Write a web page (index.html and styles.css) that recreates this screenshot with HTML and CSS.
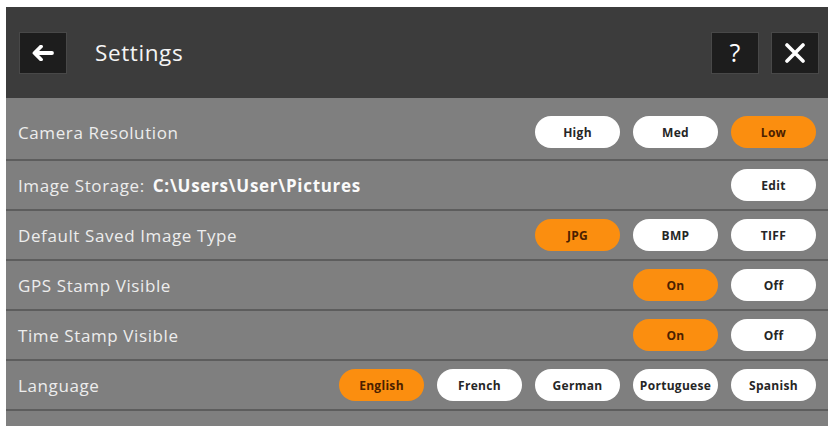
FILE: index.html
```html
<!DOCTYPE html>
<html>
<head>
<meta charset="utf-8">
<link rel="stylesheet" href="styles.css">
</head>
<body>
<div class="app">
  <div class="topbar">
    <button class="icon-btn" aria-label="Back">
      <svg width="22" height="16" viewBox="0 0 22 16"><path d="M9 1.5 L2.5 8 L9 14.5 M3 8 H20" fill="none" stroke="#fff" stroke-width="3.8" stroke-linecap="round" stroke-linejoin="round"/></svg>
    </button>
    <div class="title">Settings</div>
    <div class="top-actions">
      <button class="icon-btn glyph">?</button>
      <button class="icon-btn" aria-label="Close">
        <svg width="22" height="20" viewBox="0 0 22 20"><path d="M3 2 L19 18 M19 2 L3 18" fill="none" stroke="#fff" stroke-width="3.6" stroke-linecap="round"/></svg>
      </button>
    </div>
  </div>
  <div class="list">
    <div class="row first">
      <div class="label">Camera Resolution</div>
      <div class="options">
        <span class="pill">High</span><span class="pill">Med</span><span class="pill on">Low</span>
      </div>
    </div>
    <div class="row">
      <div class="label">Image Storage: <b class="path">C:\Users\User\Pictures</b></div>
      <div class="options">
        <span class="pill">Edit</span>
      </div>
    </div>
    <div class="row">
      <div class="label">Default Saved Image Type</div>
      <div class="options">
        <span class="pill on">JPG</span><span class="pill">BMP</span><span class="pill">TIFF</span>
      </div>
    </div>
    <div class="row">
      <div class="label">GPS Stamp Visible</div>
      <div class="options">
        <span class="pill on">On</span><span class="pill">Off</span>
      </div>
    </div>
    <div class="row">
      <div class="label">Time Stamp Visible</div>
      <div class="options">
        <span class="pill on">On</span><span class="pill">Off</span>
      </div>
    </div>
    <div class="row">
      <div class="label">Language</div>
      <div class="options">
        <span class="pill on">English</span><span class="pill">French</span><span class="pill">German</span><span class="pill">Portuguese</span><span class="pill">Spanish</span>
      </div>
    </div>
  </div>
</div>
</body>
</html>
```

FILE: styles.css
```css
html, body {
  margin: 0;
  padding: 0;
  background: #ffffff;
  height: 100%;
  overflow: hidden;
}
.app {
  margin: 7px 3px 0 6px;
  background: #7f7f7f;
  height: calc(100% - 7px);
  font-family: "Open Sans", "Noto Sans", sans-serif;
}
.topbar {
  height: 91px;
  box-sizing: border-box;
  background: #3c3c3c;
  display: flex;
  align-items: center;
  padding: 0 9px 0 13px;
}
.icon-btn {
  width: 48px;
  height: 42px;
  box-sizing: border-box;
  background: #1d1d1d;
  border: 1px solid #484848;
  display: flex;
  align-items: center;
  justify-content: center;
  padding: 0;
  margin: 0;
}
.glyph {
  color: #fff;
  font-family: "Open Sans", sans-serif;
  font-size: 25px;
  line-height: 1;
}
.title {
  margin-left: 28px;
  color: #f4f4f4;
  font-size: 22.5px;
  font-weight: 400;
  letter-spacing: 0.6px;
}
.top-actions {
  margin-left: auto;
  display: flex;
  gap: 12px;
}
.row {
  height: 50px;
  box-sizing: border-box;
  border-bottom: 2px solid #5d5d5d;
  display: flex;
  align-items: center;
  padding: 0 12px;
}
.row.first {
  height: 63px;
  padding-top: 7px;
}
.label {
  color: #ededed;
  font-size: 17px;
  letter-spacing: 0.6px;
  white-space: nowrap;
}
.path {
  font-weight: 700;
  color: #fafafa;
  margin-left: 3px;
  letter-spacing: 0.7px;
}
.options {
  margin-left: auto;
  display: flex;
  gap: 13px;
}
.pill {
  width: 85px;
  height: 32px;
  border-radius: 16px;
  background: #ffffff;
  color: #262626;
  font-size: 12px;
  letter-spacing: 0.3px;
  font-weight: 700;
  display: flex;
  align-items: center;
  justify-content: center;
}
.pill.on {
  background: #fb8e0f;
  color: #4a2000;
}
```
